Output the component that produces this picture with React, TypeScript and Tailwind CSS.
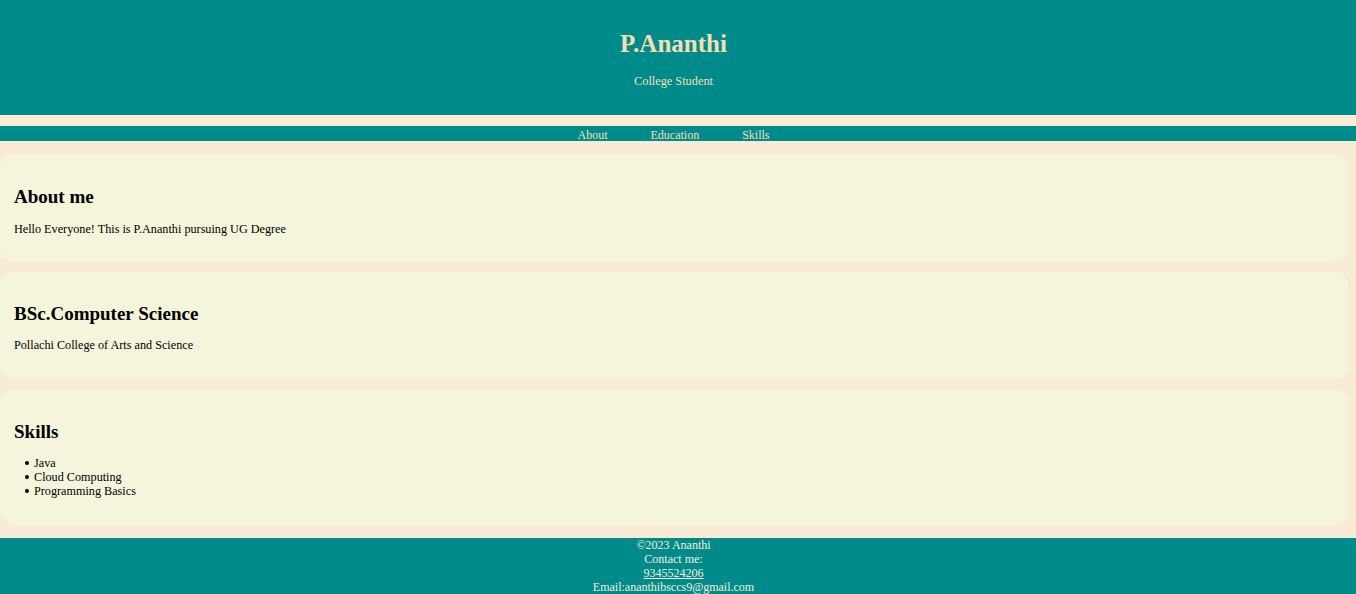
import React from "react";

const font = { fontFamily: '"Liberation Serif", "DejaVu Serif", serif' };

function Card({ title, children, pb = "pb-[25px]" }: { title: string; children: React.ReactNode; pb?: string }) {
  return (
    <section className={`mr-2 rounded-[15px] bg-[#F5F5DC] px-[14px] pt-[31px] text-black ${pb}`}>
      <h2 className="text-[19px] font-bold leading-[23px]">{title}</h2>
      {children}
    </section>
  );
}

export default function App() {
  return (
    <div className="min-h-[594px] bg-[#FAEBD7]" style={font}>
      <header className="flex h-[115px] flex-col items-center bg-[#008B8B] pr-[9px] text-[#F5DEB3]">
        <h1 className="mt-[30px] text-[25px] font-bold leading-[28px]">P.Ananthi</h1>
        <p className="mt-[16px] text-[12.3px] leading-[14px]">College Student</p>
      </header>
      <nav className="mt-[11px] flex h-[15px] items-center justify-center gap-[43px] bg-[#008B8B] pr-[9px] pt-[3px] text-[12px] leading-[12px] text-[#F5DEB3]">
        <a>About</a>
        <a>Education</a>
        <a>Skills</a>
      </nav>
      <main className="mt-[13px] flex flex-col gap-[9px]">
        <Card title="About me" pb="pb-[25px]">
          <p className="mt-[14px] text-[12.2px] leading-[15px]">Hello Everyone! This is P.Ananthi pursuing UG Degree</p>
        </Card>
        <Card title="BSc.Computer Science" pb="pb-[27px]">
          <p className="mt-[13px] text-[12.2px] leading-[15px]">Pollachi College of Arts and Science</p>
        </Card>
        <section className="mr-2 rounded-[15px] bg-[#F5F5DC] px-[14px] pt-[31px] pb-[27px] text-black">
          <h2 className="text-[19px] font-bold leading-[23px]">Skills</h2>
          <ul className="mt-[13px] pl-[11px] text-[12.2px] leading-[14px]">
            {["Java", "Cloud Computing", "Programming Basics"].map((s) => (
              <li key={s} className="flex items-center">
                <span className="mr-[5px] h-[4px] w-[4px] rounded-full bg-black" />
                {s}
              </li>
            ))}
          </ul>
        </section>
      </main>
      <footer className="mt-[13px] bg-[#008B8B] pr-[9px] pb-2 text-center text-[12px] leading-[14px] text-[#FAEBD7]">
        <p>©2023 Ananthi</p>
        <p>Contact me:</p>
        <p><a className="underline">9345524206</a></p>
        <p>Email:ananthibsccs9@gmail.com</p>
      </footer>
    </div>
  );
}
